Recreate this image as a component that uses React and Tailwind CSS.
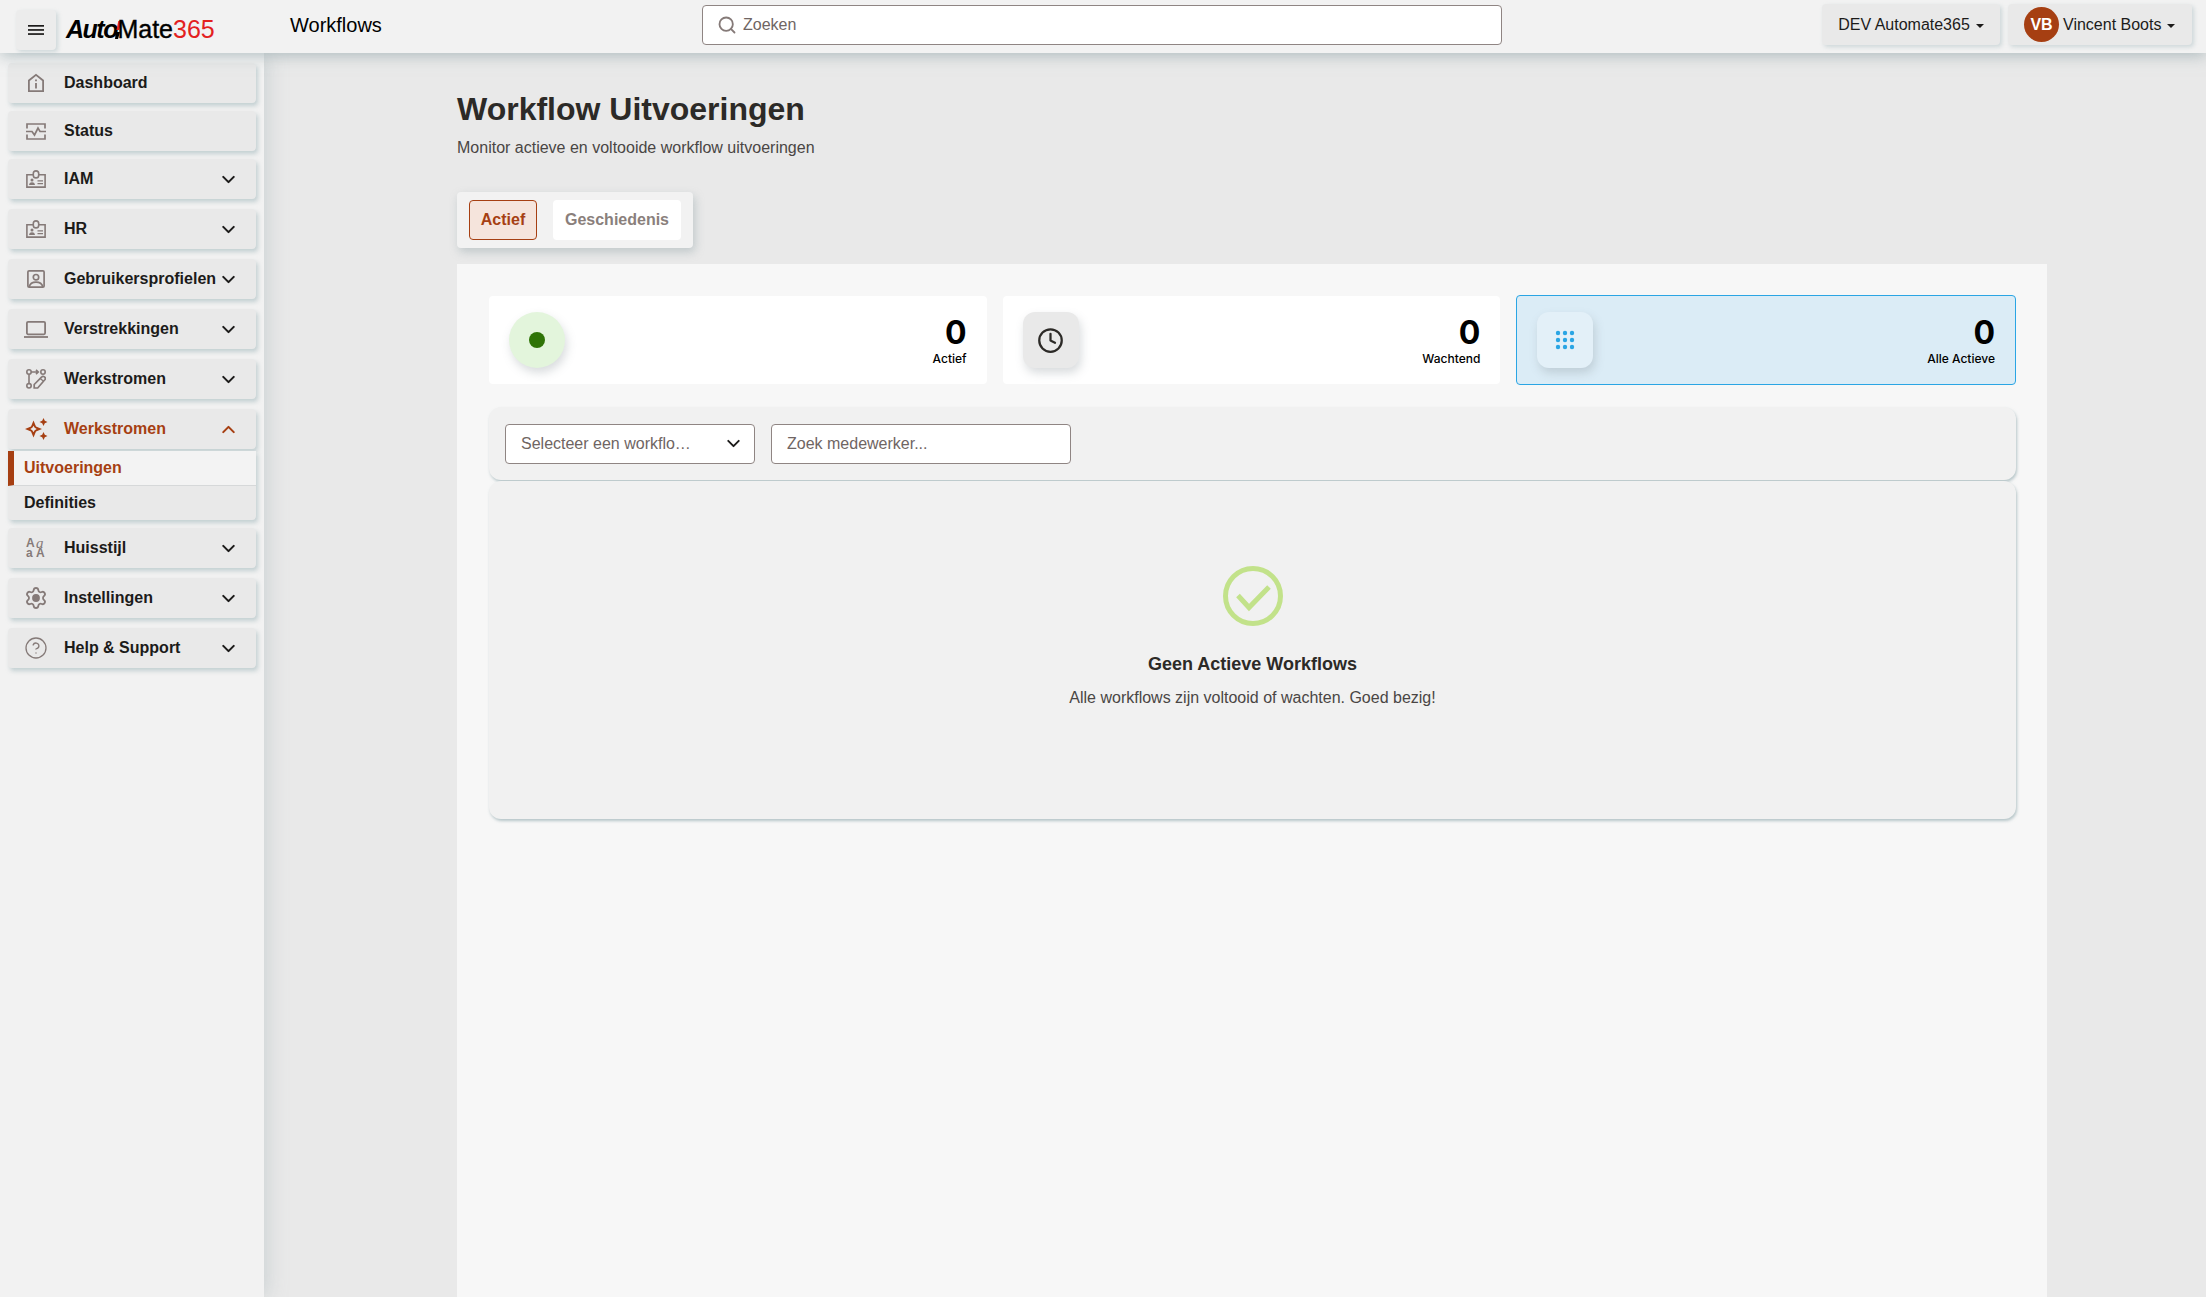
import { ChevronDown, ChevronUp, Clock, Search, Settings, CircleHelp } from 'lucide-react';

const FONT = "font-['Liberation_Sans',Arial,sans-serif]";
const ICON = '#857a78';
const RUST = '#a63f12';

function MenuBars() {
  return (
    <svg width="16" height="10" viewBox="0 0 16 10" fill="#1c1b1a">
      <rect width="16" height="1.700" />
      <rect y="4.100" width="16" height="1.700" />
      <rect y="8.200" width="16" height="1.700" />
    </svg>
  );
}

function HouseInfo() {
  return (
    <svg width="20" height="20" viewBox="0 0 20 20" fill="none" stroke={ICON} strokeWidth="1.800">
      <path d="M2.900 18.100V7.500L10 1.900l7.100 5.600v10.600z" />
      <path d="M10 10v5.500M10 6.600v1.700" />
    </svg>
  );
}

function StatusIcon() {
  return (
    <svg width="20" height="17" viewBox="0 0 20 17" fill="none" stroke={ICON} strokeWidth="1.700">
      <path d="M1 5.500V1h18v4.500M1 11.500V16h18v-4.500" />
      <path d="M0 8.500h6l2.500 3.500L12 5l2 3.500h6" />
    </svg>
  );
}

function BadgeIcon() {
  return (
    <svg width="20" height="18" viewBox="0 0 20 18" fill="none" stroke={ICON} strokeWidth="1.600">
      <path d="M7 4.800H.9v12.300h18.200V4.800H13" />
      <rect x="7.300" y="0.900" width="5.400" height="7" rx="2.700" />
      <circle cx="6" cy="10" r="1.500" fill={ICON} stroke="none" />
      <path d="M3 15c.3-2 1.500-2.700 3-2.700s2.700.7 3 2.700z" fill={ICON} stroke="none" />
      <path d="M11.500 10.800H17M11.500 13.600H17" strokeWidth="1.300" />
    </svg>
  );
}

function ProfileIcon() {
  return (
    <svg width="18" height="18" viewBox="0 0 18 18" fill="none" stroke={ICON} strokeWidth="1.700">
      <rect x="0.900" y="0.900" width="16.200" height="16.200" rx="1.200" />
      <circle cx="9" cy="7.200" r="2.700" />
      <path d="M2.200 17c.8-3.400 3.500-4.800 6.800-4.800s6 1.400 6.800 4.800" />
    </svg>
  );
}

function LaptopIcon() {
  return (
    <svg width="24" height="17" viewBox="0 0 24 17" fill="none" stroke={ICON} strokeWidth="1.800">
      <rect x="2.900" y="0.900" width="18.200" height="12.400" rx="1.200" />
      <path d="M0 16h24" />
    </svg>
  );
}

function FlowEditIcon() {
  return (
    <svg width="20" height="20" viewBox="0 0 20 20" fill="none" stroke={ICON} strokeWidth="1.600">
      <circle cx="3" cy="3" r="2.200" />
      <circle cx="17" cy="3" r="2.200" />
      <circle cx="3" cy="16.800" r="2.200" />
      <path d="M3 5.200v9.400M5.200 3h7M10 .8 12.300 3 10 5.200" />
      <path d="M8.200 19v-3.500l7.300-7.300a1.800 1.800 0 0 1 3.300 2.600L11.700 19z" strokeWidth="1.700" />
      <path d="M14.200 9.500l3.400 2.800" strokeWidth="1.300" />
    </svg>
  );
}

function SparkleIcon() {
  return (
    <svg width="23" height="22" viewBox="0 0 23 22" fill={RUST}>
      <path d="M8.500 2.500l2.500 6 6 2.500-6 2.500-2.500 6-2.500-6-6-2.500 6-2.500zM8.500 7.800l-1.200 2-2 1.200 2 1.200 1.200 2 1.200-2 2-1.200-2-1.200z" fillRule="evenodd" />
      <path d="M18.500 0l1.300 2.700 2.700 1.300-2.700 1.300L18.500 8l-1.300-2.700L14.500 4l2.700-1.300z" />
      <path d="M18.500 14l1.300 2.700 2.700 1.300-2.700 1.300-1.300 2.700-1.300-2.700-2.700-1.300 2.700-1.300z" />
    </svg>
  );
}

function FontsIcon() {
  return (
    <div className="grid h-5 w-5 grid-cols-2 text-[12px] font-bold leading-[10px] text-[#857a78]">
      <span>A</span>
      <span className="font-['Liberation_Serif',serif] text-[15px] font-normal italic">a</span>
      <span>a</span>
      <span>A</span>
    </div>
  );
}

const menuTop = [
  { label: 'Dashboard', icon: <HouseInfo />, mb: 'mb-2' },
  { label: 'Status', icon: <StatusIcon />, mb: 'mb-2' },
  { label: 'IAM', icon: <BadgeIcon />, arrow: true },
  { label: 'HR', icon: <BadgeIcon />, arrow: true },
  { label: 'Gebruikersprofielen', icon: <ProfileIcon />, arrow: true },
  { label: 'Verstrekkingen', icon: <LaptopIcon />, arrow: true },
  { label: 'Werkstromen', icon: <FlowEditIcon />, arrow: true },
];

const menuBottom = [
  { label: 'Huisstijl', icon: <FontsIcon />, arrow: true },
  { label: 'Instellingen', icon: <Settings size={24} color={ICON} strokeWidth={1.8} className="[&>circle]:fill-[#857a78]" />, arrow: true },
  { label: 'Help & Support', icon: <CircleHelp size={24} color={ICON} strokeWidth={1.3} />, arrow: true },
];

function MenuItem({ label, icon, arrow, mb = 'mb-[10px]' }) {
  return (
    <div className={`flex h-10 items-center rounded bg-[#e9e9e9] shadow-[2px_3px_4px_rgba(150,175,180,0.5)] ${mb}`}>
      <div className="flex w-14 shrink-0 items-center justify-center">{icon}</div>
      <span className="whitespace-nowrap text-base font-bold text-[#1c1b1a]">{label}</span>
      {arrow && <ChevronDown size={21} strokeWidth={2.4} className="ml-auto mr-[17px] shrink-0 text-[#1c1b1a]" />}
    </div>
  );
}

function Logo() {
  return (
    <div className="ml-[10px] mt-[17px] flex w-[147px] items-baseline text-[25px] leading-[25px] text-black">
      <span className="font-bold italic tracking-[-1.5px]">Auto</span>
      <svg width="9" height="18" viewBox="0 0 9 18" className="ml-[-4px] mr-[-4.500px] shrink-0 self-center">
        <path d="M3.500 9 5.300 0H9L6 9z" fill="#e3211f" />
        <path d="M2.800 11 2 18h3l2-7z" fill="#000" />
      </svg>
      <span className="[-webkit-text-stroke:0.4px_black]">Mate</span>
      <span className="text-[#e3211f]">365</span>
    </div>
  );
}

function StatCard({ icon, iconBox, value, label, active }) {
  return (
    <div className={`flex flex-1 items-center justify-between rounded pl-[20px] pr-[20px] ${active ? 'h-[90px] border border-[#2aa5e4] bg-[#dbecf6]' : 'h-[88px] bg-white'}`}>
      <div className={`flex h-14 w-14 items-center justify-center shadow-[2px_5px_10px_rgba(130,140,145,0.3)] ${iconBox}`}>{icon}</div>
      <div className="pt-[2px] text-right font-['Inter',sans-serif] text-black">
        <div className="text-[32px] font-bold leading-[35px]">{value}</div>
        <div className="text-xs font-medium leading-[18px]">{label}</div>
      </div>
    </div>
  );
}

function DotsIcon() {
  const dots = [];
  for (let y = 3; y <= 17; y += 7) {
    for (let x = 3; x <= 17; x += 7) dots.push(<circle key={`${x}-${y}`} cx={x} cy={y} r="2.200" />);
  }
  return (
    <svg width="20" height="20" viewBox="0 0 20 20" fill="#2aa5e4">
      {dots}
    </svg>
  );
}

function CheckCircle() {
  return (
    <svg width="60" height="60" viewBox="0 0 60 60" fill="none" stroke="#c2e28a" strokeWidth="5">
      <circle cx="30" cy="30" r="27.500" />
      <path d="M15 29.500 26 41.500 46 21" />
    </svg>
  );
}

function Caret() {
  return <span className="ml-[2px] mt-0.5 h-0 w-0 border-x-[4.5px] border-t-[4.5px] border-x-transparent border-t-[#1c1b1a]" />;
}

export default function App() {
  return (
    <div className={`flex h-screen flex-col overflow-hidden bg-[#e9e9e9] ${FONT}`}>
      {/* top bar */}
      <header className="relative z-20 flex h-[53px] shrink-0 items-start bg-[#f2f2f2] pl-4 pr-[14px] shadow-[0_3px_14px_rgba(140,160,165,0.6)]">
        <button className="mt-[10px] flex h-10 w-10 items-center justify-center rounded bg-[#ececec] shadow-[2px_2px_4px_rgba(150,175,180,0.4)]">
          <MenuBars />
        </button>
        <Logo />
        <h1 className="ml-[77px] mt-[15px] w-[412px] text-xl leading-5 text-black">Workflows</h1>
        <div className="mt-[5px] flex h-10 w-[800px] items-center rounded border border-[#8f8583] bg-white pl-[14px]">
          <Search size={20} strokeWidth={2.2} color={ICON} />
          <span className="ml-[6px] text-base text-[#6f6563]">Zoeken</span>
        </div>
        <div className="ml-auto mt-1 flex items-center gap-2">
          <div className="flex h-[41px] w-[178px] items-center justify-center gap-1 rounded bg-[#e9e9e9] text-base text-[#1c1b1a] shadow-[2px_2px_4px_rgba(150,175,180,0.4)]">
            DEV Automate365
            <Caret />
          </div>
          <div className="flex h-[41px] w-[184px] items-center gap-1 rounded bg-[#e9e9e9] pl-4 text-base text-[#1c1b1a] shadow-[2px_2px_4px_rgba(150,175,180,0.4)]">
            <span className="flex h-[35px] w-[35px] items-center justify-center rounded-full bg-[#a63f12] font-bold text-white">VB</span>
            Vincent Boots
            <Caret />
          </div>
        </div>
      </header>

      <div className="flex min-h-0 flex-1">
        {/* sidebar */}
        <aside className="relative z-10 w-[264px] shrink-0 bg-[#f2f2f2] pl-2 pr-2 pt-[10px] shadow-[2px_0_20px_rgba(140,160,165,0.35)]">
          {menuTop.map((item) => (
            <MenuItem key={item.label} {...item} />
          ))}

          <div className="mb-[2px] flex h-10 items-center rounded bg-[#e9e9e9] shadow-[2px_3px_4px_rgba(150,175,180,0.5)]">
            <div className="flex w-14 shrink-0 items-center justify-center"><SparkleIcon /></div>
            <span className="text-base font-bold text-[#a63f12]">Werkstromen</span>
            <ChevronUp size={21} strokeWidth={2.4} className="ml-auto mr-[17px] shrink-0 text-[#a63f12]" />
          </div>
          <div className="mb-2 rounded-b bg-[#e9e9e9] text-base font-bold shadow-[2px_3px_4px_rgba(150,175,180,0.5)]">
            <div className="flex h-[35px] items-center border-b border-b-[#d6d8d9] border-l-[6px] border-l-[#a63f12] bg-[#f3f3f3] pl-[10px] text-[#a63f12]">Uitvoeringen</div>
            <div className="flex h-[34px] items-center pl-4 text-[#1c1b1a]">Definities</div>
          </div>

          {menuBottom.map((item) => (
            <MenuItem key={item.label} {...item} />
          ))}
        </aside>

        {/* main */}
        <main className="flex min-w-0 flex-1 flex-col pl-[193px] pr-[159px] pt-[36px]">
          <h2 className="text-[32px] font-bold leading-10 text-[#2c2a27]">Workflow Uitvoeringen</h2>
          <p className="mt-[9px] text-base leading-5 text-[#4a4644]">Monitor actieve en voltooide workflow uitvoeringen</p>

          <div className="mt-[34px] flex h-14 w-[236px] items-center gap-4 rounded bg-[#f2f2f2] pl-3 shadow-[2px_4px_10px_rgba(130,150,155,0.4)]">
            <div className="flex h-10 w-[68px] items-center justify-center rounded border border-[#a63f12] bg-[#f5e4dc] text-base font-bold text-[#a63f12]">Actief</div>
            <div className="flex h-10 w-[128px] items-center justify-center rounded bg-white text-base font-bold text-[#8a7f7c]">Geschiedenis</div>
          </div>

          <section className="mt-4 flex-1 bg-[#f7f7f7] pl-8 pr-[31px] pt-[31px]">
            <div className="flex items-center gap-4">
              <StatCard
                iconBox="rounded-full bg-[#e3f5dc]"
                icon={<span className="block h-4 w-4 rounded-full bg-[#2f7407]" />}
                value="0"
                label="Actief"
              />
              <StatCard
                iconBox="rounded-xl bg-[#e9e9e9]"
                icon={<Clock size={27} strokeWidth={2} className="text-[#2c2a27]" />}
                value="0"
                label="Wachtend"
              />
              <StatCard
                active
                iconBox="rounded-xl bg-[#e3f0f8]"
                icon={<DotsIcon />}
                value="0"
                label="Alle Actieve"
              />
            </div>

            {/* filters */}
            <div className="mt-[22px] flex h-[73px] items-center gap-4 rounded-xl bg-[#f1f1f1] px-4 shadow-[1px_2px_3px_rgba(140,165,170,0.6)]">
              <div className="flex h-10 w-[250px] items-center justify-between rounded border border-[#8f8583] bg-white pl-[15px] pr-[10px] text-base text-[#6f6563]">
                Selecteer een workflo…
                <ChevronDown size={21} strokeWidth={2.2} className="text-[#1c1b1a]" />
              </div>
              <div className="flex h-10 w-[300px] items-center rounded border border-[#8f8583] bg-white pl-[15px] text-base text-[#6f6563]">
                Zoek medewerker...
              </div>
            </div>

            {/* empty state */}
            <div className="relative mt-px flex h-[338px] flex-col items-center rounded-xl bg-[#f1f1f1] pt-[85px] shadow-[1px_2px_3px_rgba(140,165,170,0.6)]">
              <CheckCircle />
              <h3 className="mt-[26px] text-lg font-bold leading-6 text-[#2c2a27]">Geen Actieve Workflows</h3>
              <p className="mt-[12px] text-base leading-5 text-[#4a4644]">Alle workflows zijn voltooid of wachten. Goed bezig!</p>
            </div>
          </section>
        </main>
      </div>
    </div>
  );
}
